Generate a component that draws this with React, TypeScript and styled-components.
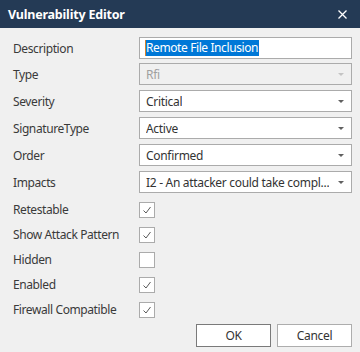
import React from "react";
import styled, { createGlobalStyle } from "styled-components";

const GlobalStyle = createGlobalStyle`
  html, body { margin: 0; padding: 0; background: #f0f0f0; }
  * { box-sizing: border-box; }
`;

const Dialog = styled.div`
  width: 360px;
  height: 352px;
  background: #f0f0f0;
  font-family: "Noto Sans", "Open Sans", sans-serif;
  font-size: 12px;
  color: #333;
  display: flex;
  flex-direction: column;
`;

const TitleBar = styled.div`
  height: 28px;
  background: #243a55;
  display: flex;
  align-items: center;
  justify-content: space-between;
  padding: 0 13px 0 8px;
`;

const Title = styled.div`
  color: #fff;
  font-weight: 700;
  font-size: 12.5px;
  letter-spacing: -0.2px;
`;

const CloseButton = styled.button`
  width: 10px;
  height: 10px;
  padding: 0;
  border: none;
  background: transparent;
  display: flex;
  align-items: center;
  justify-content: center;
`;

const Body = styled.div`
  padding: 9px 8px 0 13px;
  display: flex;
  flex-direction: column;
`;

const FieldRow = styled.div<{ $gap: number }>`
  display: grid;
  grid-template-columns: 126px 1fr;
  align-items: center;
  height: 22px;
  margin-bottom: ${(p) => p.$gap}px;
`;

const CheckRow = styled.div`
  display: grid;
  grid-template-columns: 126px 1fr;
  align-items: center;
  height: 25px;
`;

const Label = styled.div`
  color: #3a3a3a;
  white-space: nowrap;
  letter-spacing: -0.4px;
`;

const TextBox = styled.div`
  height: 22px;
  border: 1px solid #ababab;
  background: #fff;
  padding-left: 5px;
  display: flex;
  align-items: center;
`;

const Caret = styled.span`
  width: 1px;
  height: 16px;
  background: #d9822b;
`;

const Selection = styled.span`
  background: #0078d7;
  color: #fff;
  height: 16px;
  line-height: 16px;
  padding-right: 1px;
  letter-spacing: -0.4px;
`;

const Select = styled.div<{ $disabled?: boolean }>`
  height: 22px;
  border: 1px solid #ababab;
  background: ${(p) => (p.$disabled ? "#f0f0f0" : "#fff")};
  color: ${(p) => (p.$disabled ? "#a0a0a0" : "#333")};
  padding: 0 7px 0 6px;
  display: flex;
  align-items: center;
  justify-content: space-between;
`;

const SelectText = styled.span`
  white-space: nowrap;
  overflow: hidden;
  letter-spacing: -0.3px;
  color: inherit;
`;

const Arrow = styled.span<{ $disabled?: boolean }>`
  width: 0;
  height: 0;
  border-left: 3px solid transparent;
  border-right: 3px solid transparent;
  border-top: 3px solid ${(p) => (p.$disabled ? "#c4c4c4" : "#606060")};
  margin-left: 6px;
  flex-shrink: 0;
`;

const Box = styled.div`
  width: 16px;
  height: 16px;
  border: 1px solid #ababab;
  background: #fff;
  display: flex;
  align-items: center;
  justify-content: center;
`;

const Footer = styled.div`
  display: flex;
  justify-content: flex-end;
  gap: 6px;
  margin-top: 2px;
`;

const Button = styled.button<{ $primary?: boolean }>`
  width: 75px;
  height: 23px;
  background: #fff;
  border: 1px solid ${(p) => (p.$primary ? "#7a7a7a" : "#adadad")};
  font-family: inherit;
  font-size: 12px;
  color: #333;
  padding: 0;
  letter-spacing: -0.3px;
`;

const Check = () => (
  <svg width="10" height="10" viewBox="0 0 10 10">
    <polyline points="1.5,5.5 4,8 8.5,2" fill="none" stroke="#5a5a5a" strokeWidth="1" />
  </svg>
);

const selects: { label: string; value: string; disabled?: boolean }[] = [
  { label: "Type", value: "Rfi", disabled: true },
  { label: "Severity", value: "Critical" },
  { label: "SignatureType", value: "Active" },
  { label: "Order", value: "Confirmed" },
  { label: "Impacts", value: "I2 - An attacker could take compl..." },
];

const checks: { label: string; checked: boolean }[] = [
  { label: "Retestable", checked: true },
  { label: "Show Attack Pattern", checked: true },
  { label: "Hidden", checked: false },
  { label: "Enabled", checked: true },
  { label: "Firewall Compatible", checked: true },
];

export default function App() {
  return (
    <>
      <GlobalStyle />
      <Dialog>
        <TitleBar>
          <Title>Vulnerability Editor</Title>
          <CloseButton aria-label="Close">
            <svg width="9" height="9" viewBox="0 0 9 9">
              <path d="M0.5 0.5 L8.5 8.5 M8.5 0.5 L0.5 8.5" stroke="#fff" strokeWidth="1.3" />
            </svg>
          </CloseButton>
        </TitleBar>
        <Body>
          <FieldRow $gap={4}>
            <Label>Description</Label>
            <TextBox>
              <Caret />
              <Selection>Remote File Inclusion</Selection>
            </TextBox>
          </FieldRow>
          {selects.map((s, i) => (
            <FieldRow key={s.label} $gap={i === selects.length - 1 ? 4 : 5}>
              <Label>{s.label}</Label>
              <Select $disabled={s.disabled}>
                <SelectText>{s.value}</SelectText>
                <Arrow $disabled={s.disabled} />
              </Select>
            </FieldRow>
          ))}
          {checks.map((c) => (
            <CheckRow key={c.label}>
              <Label>{c.label}</Label>
              <Box>{c.checked && <Check />}</Box>
            </CheckRow>
          ))}
          <Footer>
            <Button $primary>OK</Button>
            <Button>Cancel</Button>
          </Footer>
        </Body>
      </Dialog>
    </>
  );
}
